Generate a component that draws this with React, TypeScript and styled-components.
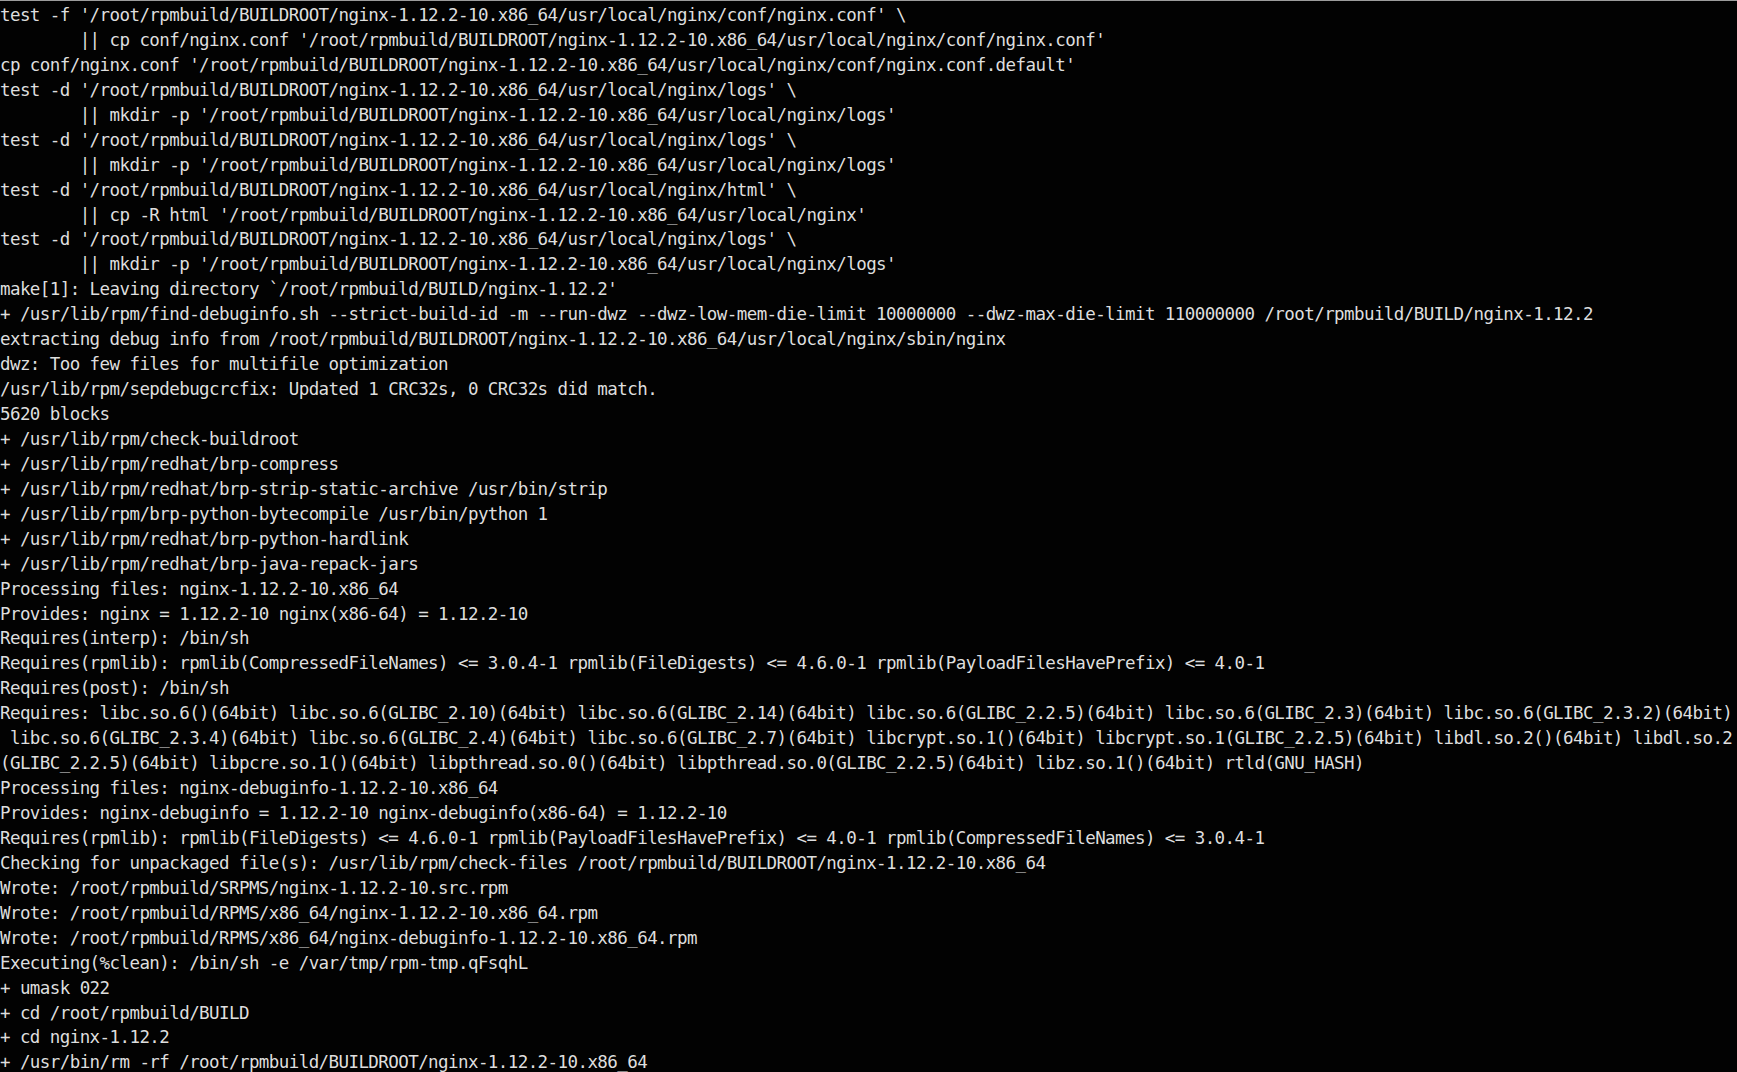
import React from "react";
import styled, { createGlobalStyle } from "styled-components";

const Global = createGlobalStyle`
  html, body {
    margin: 0;
    padding: 0;
    background: #000;
    overflow: hidden;
  }
`;

const Terminal = styled.div`
  width: 1737px;
  height: 1072px;
  box-sizing: border-box;
  background: #020202;
  border-top: 1px solid #9c9c9c;
  padding: 2px 0 0 0;
  overflow: hidden;
  display: flex;
  flex-direction: column;
`;

const Line = styled.pre`
  margin: 0;
  font-family: "DejaVu Sans Mono", "Liberation Mono", monospace;
  font-size: 17.5px;
  letter-spacing: -0.58px;
  line-height: 24.95px;
  height: 24.95px;
  flex-shrink: 0;
  color: #dedede;
  white-space: pre;
`;

const B = "/root/rpmbuild/BUILDROOT/nginx-1.12.2-10.x86_64";
const T = "        ";

const lines: string[] = [
  `test -f '${B}/usr/local/nginx/conf/nginx.conf' \\`,
  `${T}|| cp conf/nginx.conf '${B}/usr/local/nginx/conf/nginx.conf'`,
  `cp conf/nginx.conf '${B}/usr/local/nginx/conf/nginx.conf.default'`,
  `test -d '${B}/usr/local/nginx/logs' \\`,
  `${T}|| mkdir -p '${B}/usr/local/nginx/logs'`,
  `test -d '${B}/usr/local/nginx/logs' \\`,
  `${T}|| mkdir -p '${B}/usr/local/nginx/logs'`,
  `test -d '${B}/usr/local/nginx/html' \\`,
  `${T}|| cp -R html '${B}/usr/local/nginx'`,
  `test -d '${B}/usr/local/nginx/logs' \\`,
  `${T}|| mkdir -p '${B}/usr/local/nginx/logs'`,
  "make[1]: Leaving directory `/root/rpmbuild/BUILD/nginx-1.12.2'",
  "+ /usr/lib/rpm/find-debuginfo.sh --strict-build-id -m --run-dwz --dwz-low-mem-die-limit 10000000 --dwz-max-die-limit 110000000 /root/rpmbuild/BUILD/nginx-1.12.2",
  `extracting debug info from ${B}/usr/local/nginx/sbin/nginx`,
  "dwz: Too few files for multifile optimization",
  "/usr/lib/rpm/sepdebugcrcfix: Updated 1 CRC32s, 0 CRC32s did match.",
  "5620 blocks",
  "+ /usr/lib/rpm/check-buildroot",
  "+ /usr/lib/rpm/redhat/brp-compress",
  "+ /usr/lib/rpm/redhat/brp-strip-static-archive /usr/bin/strip",
  "+ /usr/lib/rpm/brp-python-bytecompile /usr/bin/python 1",
  "+ /usr/lib/rpm/redhat/brp-python-hardlink",
  "+ /usr/lib/rpm/redhat/brp-java-repack-jars",
  "Processing files: nginx-1.12.2-10.x86_64",
  "Provides: nginx = 1.12.2-10 nginx(x86-64) = 1.12.2-10",
  "Requires(interp): /bin/sh",
  "Requires(rpmlib): rpmlib(CompressedFileNames) <= 3.0.4-1 rpmlib(FileDigests) <= 4.6.0-1 rpmlib(PayloadFilesHavePrefix) <= 4.0-1",
  "Requires(post): /bin/sh",
  "Requires: libc.so.6()(64bit) libc.so.6(GLIBC_2.10)(64bit) libc.so.6(GLIBC_2.14)(64bit) libc.so.6(GLIBC_2.2.5)(64bit) libc.so.6(GLIBC_2.3)(64bit) libc.so.6(GLIBC_2.3.2)(64bit)",
  " libc.so.6(GLIBC_2.3.4)(64bit) libc.so.6(GLIBC_2.4)(64bit) libc.so.6(GLIBC_2.7)(64bit) libcrypt.so.1()(64bit) libcrypt.so.1(GLIBC_2.2.5)(64bit) libdl.so.2()(64bit) libdl.so.2",
  "(GLIBC_2.2.5)(64bit) libpcre.so.1()(64bit) libpthread.so.0()(64bit) libpthread.so.0(GLIBC_2.2.5)(64bit) libz.so.1()(64bit) rtld(GNU_HASH)",
  "Processing files: nginx-debuginfo-1.12.2-10.x86_64",
  "Provides: nginx-debuginfo = 1.12.2-10 nginx-debuginfo(x86-64) = 1.12.2-10",
  "Requires(rpmlib): rpmlib(FileDigests) <= 4.6.0-1 rpmlib(PayloadFilesHavePrefix) <= 4.0-1 rpmlib(CompressedFileNames) <= 3.0.4-1",
  `Checking for unpackaged file(s): /usr/lib/rpm/check-files ${B}`,
  "Wrote: /root/rpmbuild/SRPMS/nginx-1.12.2-10.src.rpm",
  "Wrote: /root/rpmbuild/RPMS/x86_64/nginx-1.12.2-10.x86_64.rpm",
  "Wrote: /root/rpmbuild/RPMS/x86_64/nginx-debuginfo-1.12.2-10.x86_64.rpm",
  "Executing(%clean): /bin/sh -e /var/tmp/rpm-tmp.qFsqhL",
  "+ umask 022",
  "+ cd /root/rpmbuild/BUILD",
  "+ cd nginx-1.12.2",
  `+ /usr/bin/rm -rf ${B}`,
];

export default function App() {
  return (
    <>
      <Global />
      <Terminal>
        {lines.map((l, i) => (
          <Line key={i}>{l}</Line>
        ))}
      </Terminal>
    </>
  );
}
